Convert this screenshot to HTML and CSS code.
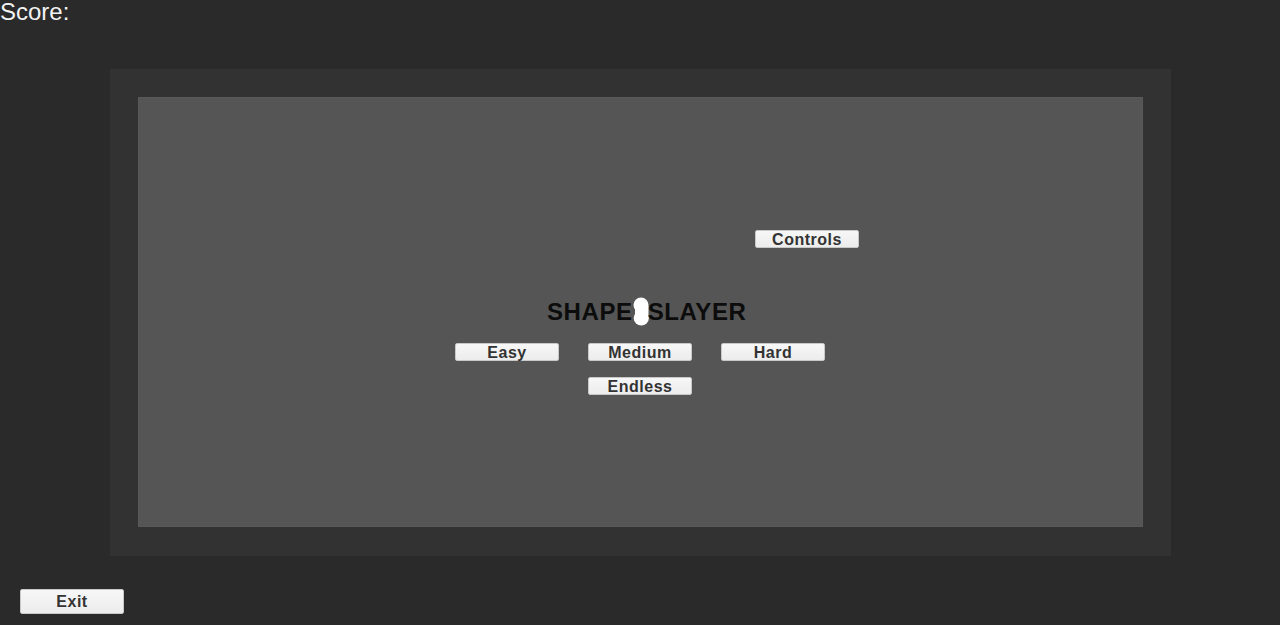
FILE: index.html
```html
<!DOCTYPE html>
<html>
<head>
<meta charset="utf-8">
<link rel="stylesheet" href="styles.css">
</head>
<body>
<div class="score">Score:</div>
<div class="outer">
  <div class="inner">
    <div class="controls-row"><button class="btn">Controls</button></div>
    <div class="title-row">
      <span class="title">SHAPE</span>
      <svg class="blob" width="16" height="29" viewBox="0 0 16 29">
        <circle cx="8" cy="8" r="7.5" fill="#fff"/>
        <circle cx="8.3" cy="21" r="7.6" fill="#fff"/>
        <rect x="2" y="9" width="13.5" height="9" fill="#fff"/>
      </svg>
      <span class="title">SLAYER</span>
    </div>
    <div class="diff-row">
      <button class="btn">Easy</button>
      <button class="btn">Medium</button>
      <button class="btn">Hard</button>
    </div>
    <div class="endless-row"><button class="btn">Endless</button></div>
  </div>
</div>
<div class="exit-row"><button class="btn btn-exit">Exit</button></div>
</body>
</html>
```
FILE: styles.css
```css
html, body {
  margin: 0;
  padding: 0;
}
body {
  width: 1280px;
  height: 625px;
  overflow: hidden;
  background: #2a2a2a;
  font-family: "Liberation Sans", Arial, sans-serif;
  display: flex;
  flex-direction: column;
}
.score {
  color: #f2f2f2;
  font-size: 24px;
  line-height: 24px;
  height: 24px;
}
.outer {
  margin-top: 45px;
  margin-left: 110px;
  width: 1061px;
  height: 487px;
  box-sizing: border-box;
  background: #323232;
  padding: 28px;
}
.inner {
  width: 1005px;
  height: 430px;
  box-sizing: border-box;
  background: #555555;
  border: 1px solid #595959;
  display: flex;
  flex-direction: column;
}
.btn {
  width: 104px;
  height: 18px;
  padding: 1px 0 0 0;
  margin: 0;
  box-sizing: border-box;
  border: 1px solid #c8c8c8;
  border-radius: 2px;
  background: linear-gradient(#f7f7f7, #ececec);
  color: #333333;
  font-family: "Liberation Sans", Arial, sans-serif;
  font-weight: bold;
  font-size: 16px;
  line-height: 16px;
  letter-spacing: 0.5px;
  display: flex;
  align-items: center;
  justify-content: center;
}
.controls-row {
  display: flex;
  margin-top: 132px;
  padding-left: 616px;
}
.title-row {
  display: flex;
  align-items: center;
  margin-top: 49px;
  padding-left: 408px;
  height: 29px;
}
.title {
  font-size: 24px;
  font-weight: bold;
  color: #0c0c0c;
  line-height: 24px;
  letter-spacing: 0.6px;
}
.blob {
  display: block;
  margin: 0 -1px 0 0;
}
.diff-row {
  display: flex;
  gap: 29px;
  margin-top: 17px;
  padding-left: 316px;
}
.endless-row {
  display: flex;
  margin-top: 16px;
  padding-left: 449px;
}
.exit-row {
  display: flex;
  margin-top: 33px;
  padding-left: 20px;
}
.btn-exit {
  height: 25px;
}
```
